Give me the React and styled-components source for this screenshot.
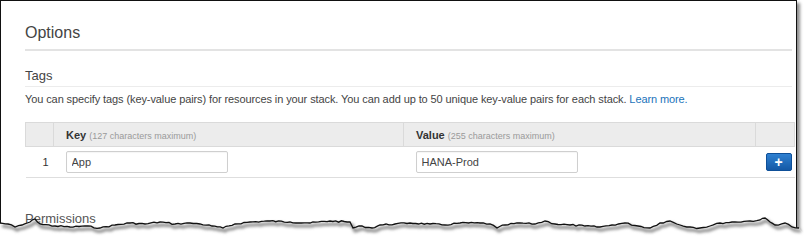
import styled, { createGlobalStyle } from "styled-components";

const GlobalStyle = createGlobalStyle`
  html, body {
    margin: 0;
    padding: 0;
    background: #fff;
  }
  body {
    font-family: "Liberation Sans", Arial, sans-serif;
    color: #444;
  }
`;

// torn paper edge, key points read off the screenshot
const tornPoints = [
  [0, 223], [8, 224], [15, 227], [22, 225], [30, 222], [35, 219], [40, 224], [55, 226],
  [70, 227], [85, 226], [100, 228], [115, 225], [130, 223], [145, 224], [160, 222],
  [175, 224], [190, 223], [200, 224], [212, 226], [223, 228], [235, 224], [250, 222],
  [270, 221], [290, 222], [310, 223], [330, 221], [350, 222], [353, 228], [362, 226],
  [372, 228], [380, 225], [395, 224], [410, 223], [430, 224], [445, 225], [460, 223],
  [480, 223], [490, 224], [497, 228], [505, 225], [520, 223], [535, 224], [545, 221],
  [555, 224], [570, 225], [585, 226], [600, 227], [612, 225], [625, 223], [638, 226],
  [650, 228], [660, 223], [670, 221], [680, 225], [690, 227], [700, 228], [710, 226],
  [720, 223], [735, 222], [750, 221], [760, 220], [765, 218], [770, 222], [775, 225],
  [785, 223], [792, 227], [799, 228],
];

const jagged = () => {
  let seed = 7;
  const rnd = () => {
    seed = (seed * 9301 + 49297) % 233280;
    return seed / 233280;
  };
  const out = [];
  for (let i = 0; i < tornPoints.length - 1; i++) {
    const [x1, y1] = tornPoints[i];
    const [x2, y2] = tornPoints[i + 1];
    const steps = Math.max(1, Math.round((x2 - x1) / 3));
    for (let s = 0; s < steps; s++) {
      const t = s / steps;
      const jit = s === 0 ? 0 : (rnd() - 0.5) * 1.6;
      out.push([x1 + (x2 - x1) * t, y1 + (y2 - y1) * t + jit]);
    }
  }
  out.push(tornPoints[tornPoints.length - 1]);
  return out;
};

const edge = jagged();
const linePath = "M" + edge.map(([x, y]) => `${x.toFixed(1)},${y.toFixed(1)}`).join(" L");
const fillPath = linePath + " L810,240 L0,240 Z";

const TornEdge = () => (
  <EdgeSvg width="810" height="240" viewBox="0 0 810 240">
    <defs>
      <filter id="tornShadow" x="-5%" y="-50%" width="110%" height="200%">
        <feGaussianBlur stdDeviation="1.5" />
      </filter>
    </defs>
    <path d={fillPath} fill="#fff" />
    <path
      d={linePath}
      transform="translate(2,3)"
      fill="none"
      stroke="#8a8a8a"
      strokeWidth="3"
      filter="url(#tornShadow)"
    />
    <path d={linePath} fill="none" stroke="#111" strokeWidth="1.3" />
  </EdgeSvg>
);

const App = () => {
  return (
    <Page>
      <GlobalStyle />
      <Sheet>
        <Heading>Options</Heading>
        <SubHeading>Tags</SubHeading>
        <Description>
          You can specify tags (key-value pairs) for resources in your stack. You can add up to 50
          unique key-value pairs for each stack. <Link href="#">Learn more.</Link>
        </Description>

        <TagTable>
          <colgroup>
            <col style={{ width: 28 }} />
            <col style={{ width: 350 }} />
            <col style={{ width: 352 }} />
            <col style={{ width: 39 }} />
          </colgroup>
          <thead>
            <tr>
              <Th />
              <Th>
                Key <Hint>(127 characters maximum)</Hint>
              </Th>
              <Th>
                Value <Hint>(255 characters maximum)</Hint>
              </Th>
              <Th />
            </tr>
          </thead>
          <tbody>
            <tr>
              <NumCell>1</NumCell>
              <Td>
                <Field defaultValue="App" />
              </Td>
              <Td>
                <Field defaultValue="HANA-Prod" />
              </Td>
              <ActionCell>
                <AddButton>+</AddButton>
              </ActionCell>
            </tr>
          </tbody>
        </TagTable>

        <SubHeading $plain>Permissions</SubHeading>
      </Sheet>
      <TornEdge />
    </Page>
  );
};

const Page = styled.div`
  position: relative;
  width: 810px;
  height: 240px;
  overflow: hidden;
  background: #fff;
`;

const Sheet = styled.div`
  width: 797px;
  height: 236px;
  box-sizing: border-box;
  border: 1.5px solid #111;
  border-bottom: none;
  box-shadow: 3px 3px 3px rgba(0, 0, 0, 0.45);
  background: #fff;
  padding: 22px 4px 0 24px;
`;

const Heading = styled.h2`
  margin: 0;
  font-size: 16px;
  line-height: 20px;
  font-weight: normal;
  color: #444;
  padding-bottom: 6px;
  border-bottom: 2px solid #e3e3e3;
`;

const SubHeading = styled.h3`
  margin: ${(p) => (p.$plain ? "33px 0 0" : "17px 0 0")};
  font-size: 13px;
  line-height: 16px;
  font-weight: normal;
  color: ${(p) => (p.$plain ? "#555" : "#444")};
  padding-bottom: 2px;
  border-bottom: ${(p) => (p.$plain ? "none" : "1px solid #ececec")};
`;

const Description = styled.p`
  margin: 5px 0 0;
  font-size: 11px;
  line-height: 14px;
  letter-spacing: -0.1px;
  color: #444;
`;

const Link = styled.a`
  color: #1a73ba;
  text-decoration: none;
`;

const TagTable = styled.table`
  margin-top: 16px;
  width: 769px;
  border-collapse: collapse;
  table-layout: fixed;
  font-size: 11px;
`;

const Th = styled.th`
  height: 23px;
  padding: 0 12px;
  background: #ececec;
  border: 1px solid #dadada;
  text-align: left;
  font-weight: bold;
  color: #333;
  white-space: nowrap;
`;

const Hint = styled.span`
  font-weight: normal;
  font-size: 9px;
  color: #9a9a9a;
`;

const Td = styled.td`
  height: 30px;
  padding: 0 12px;
  border-bottom: 1px solid #dedede;
  vertical-align: middle;
`;

const NumCell = styled(Td)`
  padding: 0 5px 0 0;
  text-align: right;
  color: #333;
`;

const ActionCell = styled(Td)`
  padding: 0 3px 0 0;
  text-align: right;
`;

const Field = styled.input`
  box-sizing: border-box;
  display: block;
  width: 162px;
  height: 22px;
  padding: 0 5px;
  border: 1px solid #cfcfcf;
  border-radius: 2px;
  font-family: "Liberation Sans", Arial, sans-serif;
  font-size: 11px;
  color: #444;
  background: #fff;
  box-shadow: inset 0 1px 1px rgba(0, 0, 0, 0.04);
`;

const AddButton = styled.button`
  width: 26px;
  height: 18px;
  padding: 0;
  border: 1px solid #0e4f98;
  border-radius: 2px;
  background: linear-gradient(#2f80d1, #1459a6);
  color: #fff;
  font-family: "Liberation Sans", Arial, sans-serif;
  font-size: 14px;
  font-weight: bold;
  line-height: 14px;
  cursor: pointer;
`;

const EdgeSvg = styled.svg`
  position: absolute;
  top: 0;
  left: 0;
  pointer-events: none;
`;

export default App;
